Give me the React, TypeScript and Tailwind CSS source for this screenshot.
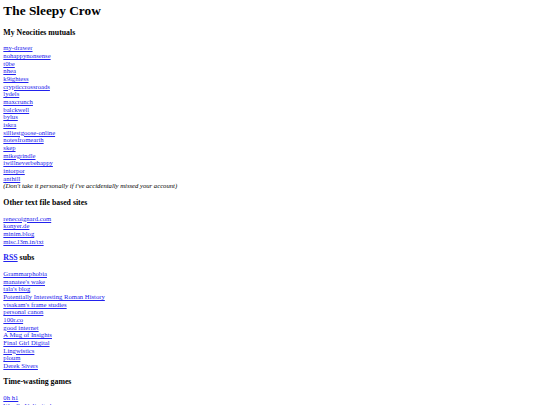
const mutuals = [
  "my-drawer",
  "nohappynonsense",
  "t0be",
  "nhea",
  "k9ightess",
  "crypticcrossroads",
  "lydels",
  "maxcrunch",
  "balckwell",
  "bylus",
  "iskra",
  "silliestgoose-online",
  "notesfromearth",
  "skep",
  "mikegrindle",
  "iwillneverbehappy",
  "intorpor",
  "anthill",
];

const textSites = ["renecoignard.com", "konyer.de", "minim.blog", "misc.l3m.in/txt"];

const rssSubs = [
  "Grammarphobia",
  "manatee's wake",
  "tala's blog",
  "Potentially Interesting Roman History",
  "visakam's frame studies",
  "personal canon",
  "100r.co",
  "good internet",
  "A Mug of Insights",
  "Final Girl Digital",
  "Lingwistics",
  "ploum",
  "Derek Sivers",
];

const games = ["0h h1", "Wordle Unlimited"];

const LinkList = ({ items }: { items: string[] }) => (
  <div>
    {items.map((item) => (
      <div key={item}>
        <a href="#" className="text-[#2222ee] underline">
          {item}
        </a>
      </div>
    ))}
  </div>
);

const Heading = ({ children }: { children: React.ReactNode }) => (
  <h3 className="my-[7.8px] text-[7.8px] font-bold leading-[9px]">{children}</h3>
);

const App = () => {
  return (
    <div className="min-h-screen bg-white p-[3.33px] font-['Liberation_Serif',serif] text-[6.67px] leading-[7.67px] text-black">
      <h1 className="mt-0 mb-[8.9px] text-[13.33px] font-bold leading-[15.3px]">The Sleepy Crow</h1>

      <Heading>My Neocities mutuals</Heading>
      <LinkList items={mutuals} />
      <div className="italic">(Don't take it personally if i've accidentally missed your account)</div>

      <Heading>Other text file based sites</Heading>
      <LinkList items={textSites} />

      <Heading>
        <a href="#" className="text-[#2222ee] underline">
          RSS
        </a>{" "}
        subs
      </Heading>
      <LinkList items={rssSubs} />

      <Heading>Time-wasting games</Heading>
      <LinkList items={games} />
    </div>
  );
};

export default App;
